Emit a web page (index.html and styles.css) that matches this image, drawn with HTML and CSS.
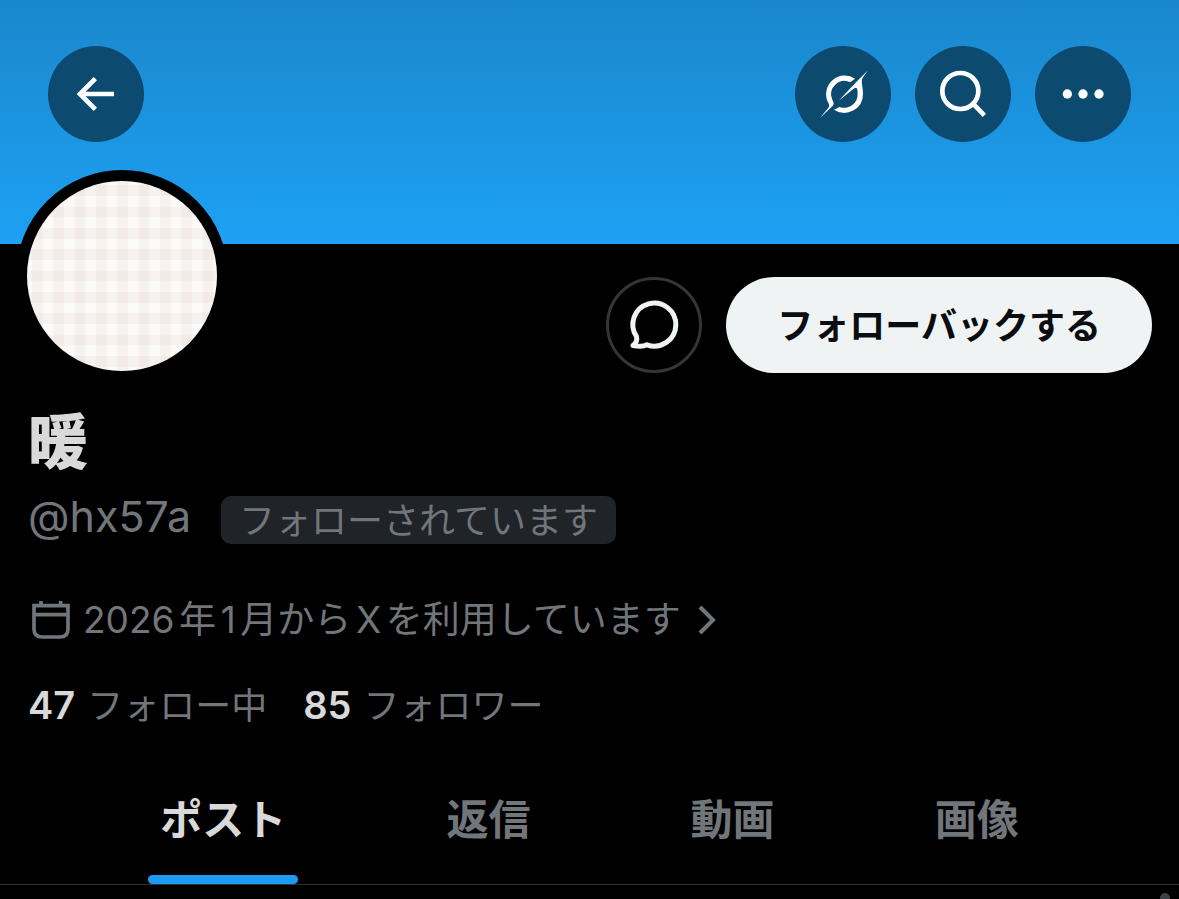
FILE: index.html
```html
<!DOCTYPE html>
<html lang="ja">
<head>
<meta charset="utf-8">
<meta name="viewport" content="width=device-width, initial-scale=1">
<title>暖 (@hx57a)</title>
<link rel="stylesheet" href="styles.css">
</head>
<body>
<header class="banner">
  <button class="round-button" type="button" aria-label="戻る">
    <svg class="button-icon" viewBox="0 0 288 288" aria-hidden="true"><path class="line" d="M198 144H98M142 98L96 144L142 190"/></svg>
  </button>
  <div class="banner-actions">
    <button class="round-button" type="button" aria-label="Grok">
      <svg class="button-icon" viewBox="0 0 288 288" aria-hidden="true"><path class="solid" d="M74 217L99 187C106 179 101 172 97 165A56 56 0 0 1 180 98L166 109A40 40 0 0 0 111 159C114 166 120 173 112 181ZM219 73L203 95C197 106 204 122 204 144A56 56 0 0 1 117 191L134 183A40 40 0 0 0 188 144C188 132 187 120 178 127L131 164L183 109Z"/></svg>
    </button>
    <button class="round-button" type="button" aria-label="検索">
      <svg class="button-icon" viewBox="0 0 288 288" aria-hidden="true"><circle class="line" cx="136" cy="135" r="54"/><path class="line" d="M174 173L208 208"/></svg>
    </button>
    <button class="round-button" type="button" aria-label="その他">
      <svg class="button-icon" viewBox="0 0 288 288" aria-hidden="true"><g class="solid"><circle cx="97" cy="144" r="14"/><circle cx="144" cy="144" r="14"/><circle cx="192" cy="144" r="14"/></g></svg>
    </button>
  </div>
</header>
<main>
  <section class="profile">
    <div class="profile-top">
      <svg class="avatar" viewBox="0 0 570 570" role="img" aria-label="プロフィール画像">
        <defs>
          <pattern id="gingham" x="15" y="13" width="64" height="64" patternUnits="userSpaceOnUse">
            <rect class="weave" width="32" height="64"/>
            <rect class="weave" width="64" height="32"/>
          </pattern>
        </defs>
        <rect class="cloth" width="570" height="570"/>
        <rect width="570" height="570" fill="url(#gingham)"/>
      </svg>
      <div class="profile-actions">
        <button class="message-button" type="button" aria-label="メッセージ">
          <svg class="button-icon" viewBox="0 0 96 96" aria-hidden="true"><path class="bubble" d="M30.5 59.6A21.5 21.5 0 1 1 41 67.8C37 70 32 69.5 27 68.5C30 66 31.5 63 30.5 59.6Z"/></svg>
        </button>
        <button class="follow-button" type="button">フォローバックする</button>
      </div>
    </div>
    <h1 class="name">暖</h1>
    <div class="identity">
      <span class="handle">@hx57a</span>
      <span class="badge">フォローされています</span>
    </div>
    <a class="joined" href="#about">
      <svg class="calendar" viewBox="0 0 114 114" aria-hidden="true"><path d="M6 14H108V84Q108 108 84 108H30Q6 108 6 84ZM6 41H108M27 0V14M86 0V14"/></svg>
      <span class="joined-text"><span class="latin">2026</span>年<span class="latin">1</span>月から<span class="latin">X</span>を利用しています</span>
      <svg class="chevron" viewBox="0 0 20 32" aria-hidden="true"><path d="M3 3L16 16L3 29"/></svg>
    </a>
    <div class="stats">
      <a class="stat" href="#following"><strong class="count">47</strong>フォロー中</a>
      <a class="stat" href="#followers"><strong class="count">85</strong>フォロワー</a>
    </div>
  </section>
  <nav class="tabs">
    <a class="tab tab-active" href="#posts">ポスト</a>
    <a class="tab" href="#replies">返信</a>
    <a class="tab" href="#videos">動画</a>
    <a class="tab" href="#images">画像</a>
  </nav>
  <div class="feed"><span class="feed-dot"></span></div>
</main>
</body>
</html>
```
FILE: styles.css
```css
* {
  box-sizing: border-box;
}

body {
  margin: 0;
  background: #000;
  color: #71767b;
  font-family: "Noto Sans CJK JP", sans-serif;
  font-size: 36px;
  line-height: 48px;
}

button {
  padding: 0;
  border: 0;
  font: inherit;
  cursor: pointer;
}

a {
  color: inherit;
  text-decoration: none;
}

.banner {
  display: flex;
  justify-content: space-between;
  padding: 46px 48px 102px;
  background: linear-gradient(#1a87cc, #1da1f4);
}

.banner-actions {
  display: flex;
  gap: 24px;
}

.round-button {
  width: 96px;
  height: 96px;
  border-radius: 50%;
  background: #0d4a70;
}

.button-icon {
  display: block;
  width: 96px;
  height: 96px;
}

.line {
  fill: none;
  stroke: #fff;
  stroke-width: 14;
}

.solid {
  fill: #fff;
}

.profile {
  padding: 0 27px 0 28px;
}

.profile-top {
  display: flex;
  justify-content: space-between;
}

.avatar {
  width: 212px;
  height: 212px;
  margin: -74px 0 0 -12px;
  border: 11px solid #000;
  border-radius: 50%;
  background: #000;
}

.cloth {
  fill: #fcfbf9;
}

.weave {
  fill: #dcc4bc;
  fill-opacity: 0.16;
}

.profile-actions {
  display: flex;
  gap: 24px;
  margin-top: 33px;
}

.message-button {
  display: grid;
  place-content: center;
  width: 96px;
  height: 96px;
  border: 3px solid #333639;
  border-radius: 50%;
  background: #000;
}

.bubble {
  fill: none;
  stroke: #eff3f4;
  stroke-width: 5;
  stroke-linejoin: round;
}

.follow-button {
  height: 96px;
  padding: 0 51px 4px;
  border-radius: 48px;
  background: #eff3f4;
  color: #0a0c0f;
  font-weight: 700;
}

.name {
  margin: 20px 0 0;
  color: #d9d9d9;
  font-size: 60px;
  font-weight: 900;
  line-height: 72px;
}

.identity {
  display: flex;
  align-items: center;
  gap: 30px;
  margin-top: 22px;
}

.handle {
  padding-bottom: 8px;
  font-family: Inter, sans-serif;
  font-size: 43px;
  line-height: 40px;
}

.badge {
  padding: 0 18px 4px;
  border-radius: 10px;
  background: #202327;
  line-height: 44px;
}

.joined {
  display: flex;
  align-items: center;
  width: fit-content;
  margin-top: 49px;
}

.calendar {
  width: 38px;
  height: 38px;
  margin: 0 13px 0 4px;
  fill: none;
  stroke: currentColor;
  stroke-width: 11;
}

.joined-text {
  padding-bottom: 2px;
  font-size: 37px;
  text-autospace: normal;
}

.latin {
  font-family: Inter, sans-serif;
}

.chevron {
  width: 20px;
  height: 32px;
  margin-left: 16px;
  fill: none;
  stroke: currentColor;
  stroke-width: 4;
}

.stats {
  display: flex;
  gap: 36px;
  margin-top: 33px;
}

.stat {
  display: flex;
  align-items: baseline;
  gap: 12px;
}

.count {
  color: #d9d9d9;
  font-family: Inter, sans-serif;
  font-size: 38px;
  font-weight: 600;
}

.tabs {
  display: flex;
  justify-content: space-evenly;
  margin-top: 25px;
  border-bottom: 1px solid #2f3336;
}

.tab {
  position: relative;
  padding: 32px 0 36px;
  font-size: 42px;
  font-weight: 700;
  line-height: 62px;
}

.tab-active {
  color: #d9d9d9;
}

.tab-active::after {
  content: "";
  position: absolute;
  right: -12px;
  bottom: 0;
  left: -12px;
  height: 9px;
  border-radius: 5px;
  background: #1d9bf0;
}

.feed {
  display: flex;
  justify-content: flex-end;
  padding: 8px 9px 0;
}

.feed-dot {
  width: 10px;
  height: 6px;
  border-radius: 5px 5px 0 0;
  background: #3e4144;
}
```
